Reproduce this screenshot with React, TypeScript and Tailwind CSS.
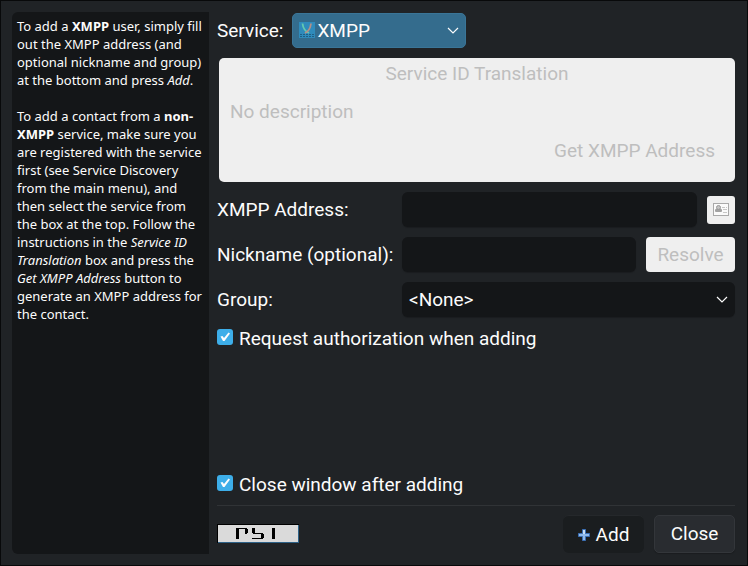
import type { ReactNode } from "react";

const field =
  "h-[35px] min-w-0 flex-1 rounded-md bg-[#141618] shadow-[0_1px_1px_rgba(0,0,0,0.2)] outline-none";

function Chevron() {
  return (
    <svg
      className="pointer-events-none absolute top-3 right-2 h-2.5 w-2.5 overflow-visible"
      viewBox="0 0 10 10"
      fill="none"
      stroke="#fcfcfc"
      strokeWidth="1.2"
      aria-hidden="true"
    >
      <path d="M0 3 5 8 10 3" />
    </svg>
  );
}

function XmppIcon() {
  return (
    <svg
      className="pointer-events-none absolute top-[9px] left-[7px] h-4 w-4"
      viewBox="0 0 16 16"
      fill="none"
      aria-hidden="true"
    >
      <rect width="16" height="16" fill="#2f8bbb" />
      <path d="M3.5 1.5C4 5.5 6.5 9.5 10 11" stroke="#62c9b0" strokeWidth="1.8" />
      <path d="M12 1.5C11.5 5.5 9.5 9.5 6 11" stroke="#b58f86" strokeWidth="1.8" />
      <path d="M1 12.5h14M1 14.5h14" stroke="#1f5f85" strokeDasharray="2 1" />
    </svg>
  );
}

function CardIcon() {
  return (
    <svg className="h-[13px] w-4" viewBox="0 0 16 13" aria-hidden="true">
      <rect x="0.5" y="0.5" width="15" height="12" fill="#fafafa" stroke="#a9a9a9" />
      <rect x="2" y="6" width="7" height="3" rx="1" fill="#a2a2a2" />
      <circle cx="5.5" cy="4.5" r="2" fill="#c4c4c4" stroke="#979797" />
      <path d="M9 4.5h3M13 4.5h1M10 6.5h4M10 9.5h4" stroke="#c6c6c6" />
    </svg>
  );
}

function PlusIcon() {
  return (
    <svg className="h-3 w-3" viewBox="0 0 12 12" aria-hidden="true">
      <path d="M4.5.5h3v4h4v3h-4v4h-3v-4h-4v-3h4z" fill="#8fb9ea" stroke="#3a6fb4" />
      <path d="M5 1h2v4H5z" fill="#c8dff7" />
    </svg>
  );
}

function PsiBanner() {
  return (
    <svg
      className="mb-px h-[19px] w-[82px]"
      viewBox="0 0 82 19"
      shapeRendering="crispEdges"
      role="img"
      aria-label="Psi"
    >
      <rect width="82" height="19" fill="#000" />
      <path d="M1 1h81v18H1z" fill="#2d6187" />
      <path d="M1 1h80v17H1z" fill="#dadada" />
      <path
        d="M19 4h11v1h1v4h-1v1h-2V5h-6v10h-3zM35 4h3v5h8v1h1v4h-1v1H35v-1h9v-4h-8v-1h-1zM55 4h3v11h-3z"
        fill="#000"
      />
    </svg>
  );
}

function Check({ id, children }: { id: string; children: ReactNode }) {
  return (
    <label htmlFor={id} className="flex items-start gap-1.5 leading-6">
      <span className="relative mt-0.5 block h-4 w-4">
        <input
          id={id}
          type="checkbox"
          defaultChecked
          className="peer block h-4 w-4 appearance-none rounded-[3px] bg-[#141618] checked:bg-[#3daee9]"
        />
        <svg
          className="pointer-events-none absolute inset-0 hidden h-4 w-4 peer-checked:block"
          viewBox="0 0 16 16"
          aria-hidden="true"
        >
          <path d="M3.5 7.5 5.5 7 7 9 11.5 3.5 13 4.5 7.5 12 6 12Z" fill="#fcfcfc" />
        </svg>
      </span>
      {children}
    </label>
  );
}

export default function App() {
  return (
    <main className="flex min-h-screen gap-2 border border-[#08090a] bg-[#202326] py-[11px] pr-3 pl-[11px] font-[Roboto,sans-serif] text-[19px] leading-[22px] text-[#fcfcfc]">
      <aside className="w-[197px] shrink-0 rounded-l-md bg-[#141618] p-[5px] font-['Noto_Sans',sans-serif] text-[13px] leading-[18px]">
        <p>
          To add a <b>XMPP</b> user, simply fill out the XMPP address (and optional nickname and
          group) at the bottom and press <i>Add</i>.
        </p>
        <p className="mt-[18px]">
          To add a contact from a <b>non-XMPP</b> service, make sure you are registered with the
          service first (see Service Discovery from the main menu), and then select the service from
          the box at the top. Follow the instructions in the <i>Service ID Translation</i> box and
          press the <i>Get XMPP Address</i> button to generate an XMPP address for the contact.
        </p>
      </aside>

      <form className="flex min-w-0 flex-1 flex-col py-px" onSubmit={(e) => e.preventDefault()}>
        <div className="flex items-center gap-[9px]">
          <label htmlFor="service">Service:</label>
          <div className="relative w-[174px]">
            <select
              id="service"
              className="block h-[35px] w-full appearance-none rounded-[5px] border border-[#3a7597] bg-[#346c8d] pl-6 outline-none"
            >
              <option>XMPP</option>
            </select>
            <XmppIcon />
            <Chevron />
          </div>
        </div>

        <section
          aria-labelledby="translation"
          className="mt-2.5 ml-0.5 flex h-[124px] flex-col rounded-[5px] bg-[#efefef] pt-[5px] text-[#bebebe]"
        >
          <h2 id="translation" className="text-center">
            Service ID Translation
          </h2>
          <p className="mt-4 pl-[11px]">No description</p>
          <button type="button" disabled className="mt-[17px] mr-5 self-end">
            Get XMPP Address
          </button>
        </section>

        <div className="mt-2.5 grid grid-cols-[176px_minmax(0,1fr)] items-center gap-x-[9px] gap-y-2.5">
          <label htmlFor="address">XMPP Address:</label>
          <div className="flex items-center gap-2.5">
            <input id="address" type="text" className={`${field} px-[7px]`} />
            <button
              type="button"
              disabled
              aria-label="User info"
              className="flex h-7 w-7 shrink-0 items-center justify-center rounded-[3px] bg-[#efefef]"
            >
              <CardIcon />
            </button>
          </div>

          <label htmlFor="nickname" className="whitespace-nowrap">
            Nickname (optional):
          </label>
          <div className="flex items-center gap-2.5">
            <input id="nickname" type="text" className={`${field} px-[7px]`} />
            <button
              type="button"
              disabled
              className="h-[35px] w-[89px] shrink-0 rounded bg-[#efefef] text-[#bebebe]"
            >
              Resolve
            </button>
          </div>

          <label htmlFor="group">Group:</label>
          <div className="relative flex">
            <select id="group" className={`${field} appearance-none px-[7px]`}>
              <option>&lt;None&gt;</option>
            </select>
            <Chevron />
          </div>
        </div>

        <div className="mt-2.5">
          <Check id="authorize">Request authorization when adding</Check>
        </div>

        <div className="mt-auto">
          <Check id="close-after">Close window after adding</Check>
        </div>

        <footer className="mt-2 flex items-center gap-2.5 border-t border-[#303336] pt-[9px]">
          <PsiBanner />
          <button
            type="submit"
            className="ml-auto flex h-[38px] w-[81px] items-center justify-center gap-1.5 rounded-md border-t border-[#25282b] bg-[#1a1d1f]"
          >
            <PlusIcon />
            Add
          </button>
          <button
            type="button"
            className="h-[38px] w-[81px] rounded-[5px] border border-[#33363a] bg-[#292c30] shadow-[0_1px_1px_rgba(0,0,0,0.2)]"
          >
            Close
          </button>
        </footer>
      </form>
    </main>
  );
}
